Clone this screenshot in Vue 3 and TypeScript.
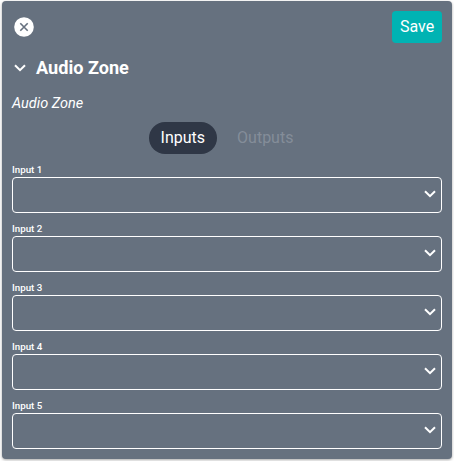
<script setup lang="ts">
import { ref } from 'vue'

type Tab = 'Inputs' | 'Outputs'

const tabs: Tab[] = ['Inputs', 'Outputs']
const activeTab = ref<Tab>('Inputs')
const open = ref(true)
const channels = [1, 2, 3, 4, 5]
</script>

<template>
  <section class="panel">
    <header class="toolbar">
      <button class="close" type="button" aria-label="Close">
        <svg width="20" height="20" viewBox="0 0 20 20">
          <circle cx="10" cy="10" r="9.8" fill="#fff" />
          <path d="M6.3 6.3 13.7 13.7M13.7 6.3 6.3 13.7" stroke="#66717f" stroke-width="1.6" />
        </svg>
      </button>
      <button class="save" type="button">Save</button>
    </header>

    <div class="heading" @click="open = !open">
      <svg class="chevron" width="12" height="8" viewBox="0 0 12 8">
        <path d="M1 1.2 6 6.2 11 1.2" />
      </svg>
      <h1>Audio Zone</h1>
    </div>

    <template v-if="open">
      <p class="description">Audio Zone</p>

      <nav class="tabs">
        <button
          v-for="tab in tabs"
          :key="tab"
          type="button"
          class="tab"
          :class="{ active: tab === activeTab }"
          @click="activeTab = tab"
        >
          {{ tab }}
        </button>
      </nav>

      <div class="fields">
        <div v-for="n in channels" :key="n" class="field">
          <span class="label">{{ activeTab.slice(0, -1) }} {{ n }}</span>
          <div class="select">
            <svg class="chevron" width="12" height="8" viewBox="0 0 12 8">
              <path d="M1 1.2 6 6.2 11 1.2" />
            </svg>
          </div>
        </div>
      </div>
    </template>
  </section>
</template>

<style>
body {
  background: #fff;
}
</style>

<style scoped>
.panel {
  box-sizing: border-box;
  width: 450px;
  height: 458px;
  margin: 1px 2px 2px;
  padding: 10px;
  border-radius: 4px;
  background: #66717f;
  box-shadow: 0 1px 3px rgba(0, 0, 0, 0.35);
  color: #fff;
  font-family: Roboto, "Liberation Sans", sans-serif;
  font-size: 16px;
}

button {
  border: 0;
  margin: 0;
  padding: 0;
  background: none;
  color: inherit;
  font: inherit;
  cursor: pointer;
}

.toolbar {
  display: flex;
  align-items: center;
  justify-content: space-between;
  height: 32px;
}

.close {
  display: flex;
  margin-left: 2px;
}

.save {
  width: 50px;
  height: 32px;
  padding-bottom: 2px;
  border-radius: 4px;
  background: #00b3b3;
}

.heading {
  display: flex;
  align-items: center;
  gap: 10px;
  height: 24px;
  margin-top: 13px;
  padding-left: 2px;
}

h1 {
  margin: 0;
  font-size: 18.1px;
  font-weight: 700;
  line-height: 24px;
}

.chevron {
  display: block;
  fill: none;
  stroke: #fff;
  stroke-width: 2;
}

.description {
  margin: 14px 0 0;
  font-size: 14.5px;
  font-style: italic;
  line-height: 20px;
}

.tabs {
  display: flex;
  justify-content: center;
  gap: 8px;
  margin-top: 8px;
}

.tab {
  height: 32px;
  padding: 0 12px 2px;
  border-radius: 16px;
  color: #848d99;
}

.tab.active {
  background: #2f3746;
  color: #fff;
}

.fields {
  display: flex;
  flex-direction: column;
  gap: 8px;
  margin-top: 8px;
}

.label {
  display: block;
  height: 15px;
  font-size: 9.75px;
  font-weight: 500;
  line-height: 15px;
}

.select {
  box-sizing: border-box;
  display: flex;
  align-items: center;
  justify-content: flex-end;
  height: 36px;
  padding: 0 5px 2px 0;
  border: 1px solid #fff;
  border-radius: 4px;
}
</style>
